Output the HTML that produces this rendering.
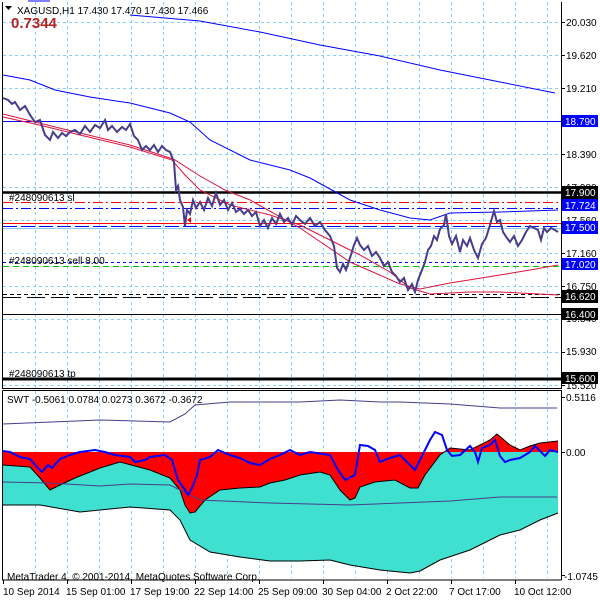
<!DOCTYPE html>
<html><head><meta charset="utf-8"><style>
html,body{margin:0;padding:0;background:#fff;width:600px;height:600px;overflow:hidden}
svg{display:block}
text{font-family:"Liberation Sans",sans-serif;font-size:10px;fill:#000}
</style></head><body>
<svg width="600" height="600" viewBox="0 0 600 600" xmlns="http://www.w3.org/2000/svg">
<rect width="600" height="600" fill="#fff"/>
<!-- vertical grid -->
<g stroke="#87cefa" stroke-width="1" stroke-dasharray="3,3">
<path d="M35.5 2V388M67.5 2V388M99.5 2V388M131.5 2V388M163.5 2V388M195.5 2V388M227.5 2V388M259.5 2V388M291.5 2V388M323.5 2V388M355.5 2V388M387.5 2V388M419.5 2V388M451.5 2V388M483.5 2V388M515.5 2V388M547.5 2V388"/>
<path d="M35.5 391V578M67.5 391V578M99.5 391V578M131.5 391V578M163.5 391V578M195.5 391V578M227.5 391V578M259.5 391V578M291.5 391V578M323.5 391V578M355.5 391V578M387.5 391V578M419.5 391V578M451.5 391V578M483.5 391V578M515.5 391V578M547.5 391V578"/>
<path d="M3 22.5H561M3 55.5H561M3 88.5H561M3 121.5H561M3 154.5H561M3 187.5H561M3 220.5H561M3 253.5H561M3 286.5H561M3 319.5H561M3 352.5H561M3 385.5H561"/>
</g>
<!-- horizontal lines -->
<path d="M3 121.5H561" stroke="#0000ff"/>
<path d="M3 192.5H561" stroke="#000" stroke-width="2.5"/>
<path d="M3 202.5H561" stroke="#ff0000" stroke-dasharray="10,3,2,3"/>
<path d="M3 208.5H561" stroke="#0000ff" stroke-dasharray="10,3,2,3"/>
<path d="M3 223.5H561" stroke="#ff0000"/>
<path d="M3 226.5H561" stroke="#0000ff" stroke-dasharray="14,4"/>
<path d="M3 228.5H561" stroke="#87cefa"/>
<path d="M3 262.5H561" stroke="#0000ff" stroke-dasharray="3,3"/>
<path d="M3 266.5H561" stroke="#00c000" stroke-dasharray="6,4"/>
<path d="M3 294.5H561" stroke="#000" stroke-dasharray="4,3"/>
<path d="M3 297.5H561" stroke="#000" stroke-dasharray="18,6"/>
<path d="M3 314.5H561" stroke="#000"/>
<path d="M3 379H561" stroke="#000" stroke-width="3"/>
<!-- MAs -->
<polyline fill="none" stroke="#0000ff" points="130,15 200,21 260,32 320,45 380,56 440,70 500,82 555,93"/>
<polyline fill="none" stroke="#0000ff" points="28,1 50,1"/>
<polyline fill="none" stroke="#0000ff" points="3,75 30,80 55,90 90,97 130,103 170,113 190,122 210,140 250,160 290,170 310,178 350,200 380,210 410,218 430,220 450,213 500,212 558,210"/>
<polyline fill="none" stroke="#dc143c" points="3,114 35,122 80,133 130,145 170,158 175,160 200,176 225,190 250,200 300,228 350,262 400,284 420,289 450,283 500,275 530,270 558,265"/>
<polyline fill="none" stroke="#dc143c" points="3,117 35,124 80,135 130,147 172,160 185,175 200,190 230,205 270,215 300,225 330,240 360,255 390,272 410,288 430,294 470,292 500,292 558,295"/>
<!-- price -->
<polyline fill="none" stroke="#483d8b" stroke-width="2" points="3,98 8,100 12,104 15,102 20,110 25,106 30,115 35,122 40,120 45,135 50,140 53,132 58,138 62,133 66,136 70,132 75,130 80,134 85,126 90,132 95,125 100,128 105,120 108,130 112,126 117,132 122,127 126,130 130,124 134,136 138,140 142,150 146,146 150,150 154,145 158,152 162,146 166,150 170,152 174,162 176,190 178,186 180,200 183,207 185,226 187,210 190,214 193,200 196,208 200,202 204,210 208,198 212,206 216,193 220,205 224,200 228,210 232,203 236,212 240,209 244,214 248,210 252,216 256,212 260,226 264,220 268,228 272,218 276,224 280,214 284,222 288,218 292,225 296,216 300,220 305,224 310,218 315,226 320,222 325,230 330,236 334,246 337,268 340,272 343,264 346,270 350,258 354,245 357,238 360,245 364,250 368,246 372,256 376,252 380,258 384,266 388,262 392,272 396,276 400,282 404,278 408,290 412,284 415,292 418,280 422,270 425,262 428,250 431,246 434,236 437,240 440,229 444,225 446,214 449,236 452,244 456,236 460,252 463,240 467,246 470,238 474,250 478,258 482,244 486,238 490,225 494,211 497,222 500,220 503,232 507,238 510,242 514,236 518,246 522,240 526,232 530,226 534,228 538,230 541,240 544,228 547,232 551,228 555,230 558,232"/>
<path d="M187 220l4-3v6z" fill="#ff0000"/>
<!-- texts in main -->
<g><path d="M5 6h7l-3.5 4z" fill="#000"/>
<text x="17" y="14">XAGUSD,H1  17.430 17.470 17.430 17.466</text>
<text x="11" y="28" style="font-size:15px;font-weight:bold;fill:#b22222">0.7344</text>
<text x="9" y="201">#248090613 sl</text>
<text x="9" y="264">#248090613 sell 8.00</text>
<text x="9" y="377">#248090613 tp</text></g>
<!-- indicator pane -->
<path d="M3 452 L3 465 30,467 40,478 50,490 60,485 75,478 100,468 120,462 150,470 170,478 180,490 185,505 190,513 195,512 205,500 220,490 240,488 260,487 270,483 285,480 300,475 320,472 330,475 340,490 350,500 355,498 360,487 375,482 395,480 410,488 418,488 425,475 440,455 445,452 Z" fill="#ff0000"/>
<path d="M445 452 L450 448 470 450 490 440 497 434 510 445 520 450 530 446 540 443 558 441 558 452 Z" fill="#ff0000"/>
<path d="M3 465 30,467 40,478 50,490 60,485 75,478 100,468 120,462 150,470 170,478 180,490 185,505 190,513 195,512 205,500 220,490 240,488 260,487 270,483 285,480 300,475 320,472 330,475 340,490 350,500 355,498 360,487 375,482 395,480 410,488 418,488 425,475 440,455 445,452 558,452 558,513 540,520 520,530 500,535 470,550 440,560 420,571 410,573 380,570 350,565 330,560 300,561 270,561 240,557 210,552 190,540 180,520 170,510 130,507 80,512 40,505 3,505Z" fill="#40e0d0"/>
<polyline fill="none" stroke="#000" points="3,465 30,467 40,478 50,490 60,485 75,478 100,468 120,462 150,470 170,478 180,490 185,505 190,513 195,512 205,500 220,490 240,488 260,487 270,483 285,480 300,475 320,472 330,475 340,490 350,500 355,498 360,487 375,482 395,480 410,488 418,488 425,475 440,455 450,448 470,450 490,440 497,434 510,445 520,450 530,446 540,443 558,441"/>
<polyline fill="none" stroke="#000" points="3,505 40,505 80,512 130,507 170,510 180,520 190,540 210,552 240,557 270,561 300,561 330,560 350,565 380,570 410,573 420,571 440,560 470,550 500,535 520,530 540,520 558,513"/>
<polyline fill="none" stroke="#483d8b" points="3,424 100,420 170,422 185,414 195,405 230,402 300,402 340,400 380,402 400,402 450,404 500,408 557,408"/>
<polyline fill="none" stroke="#483d8b" points="3,482 50,483 100,486 130,484 170,485 200,500 270,503 350,505 400,503 450,501 500,497 557,497"/>
<polyline fill="none" stroke="#0000ff" stroke-width="2" points="3,451 10,452 20,457 30,459 38,468 42,472 48,465 52,468 60,459 70,455 80,452 95,450 105,452 115,455 130,457 135,462 145,460 150,457 165,455 172,460 178,480 185,490 188,495 192,488 197,475 200,460 210,457 218,450 230,455 240,458 250,463 260,465 270,459 280,455 290,450 300,455 310,452 330,455 338,470 345,480 355,475 360,445 368,446 375,450 380,462 390,458 400,455 410,465 415,470 420,460 430,440 435,432 442,435 447,450 452,456 460,455 470,446 475,452 478,462 482,448 490,445 495,440 500,456 505,462 510,460 520,458 530,452 535,446 545,456 550,450 558,452"/>
<text x="7" y="403">SWT -0.5061 0.0784 0.0273 0.3672 -0.3672</text>
<text x="7" y="580">MetaTrader 4, © 2001-2014, MetaQuotes Software Corp.</text>
<!-- borders -->
<path d="M2.5 2V388.5H561.5V2M2.5 390.5H561.5V580M2.5 390.5V580H561.5" fill="none" stroke="#000"/>
<!-- time axis ticks -->
<path d="M3.5 580v4M67.5 580v4M131.5 580v4M195.5 580v4M259.5 580v4M323.5 580v4M387.5 580v4M451.5 580v4M515.5 580v4" stroke="#000"/>
<g><text x="3" y="595">10 Sep 2014</text><text x="66" y="595">15 Sep 01:00</text><text x="130" y="595">17 Sep 19:00</text><text x="194" y="595">22 Sep 14:00</text><text x="258" y="595">25 Sep 09:00</text><text x="322" y="595">30 Sep 04:00</text><text x="386" y="595">2 Oct 22:00</text><text x="449" y="595">7 Oct 17:00</text><text x="514" y="595">10 Oct 12:00</text></g>
<!-- price axis -->
<path d="M561 22.5h4M561 55.5h4M561 88.5h4M561 154.5h4M561 187.5h4M561 253.5h4M561 286.5h4M561 352.5h4M561 385.5h4M561 397.5h4M561 452.5h4M561 575.5h4" stroke="#000"/>
<g><text x="566" y="26">20.030</text><text x="566" y="59">19.620</text><text x="566" y="92">19.210</text><text x="566" y="158">18.390</text><text x="566" y="191">17.980</text><text x="566" y="224">17.560</text><text x="566" y="257">17.160</text><text x="566" y="290">16.750</text><text x="566" y="322">16.340</text><text x="566" y="355">15.930</text><text x="566" y="389">15.520</text>
<text x="566" y="401">0.5116</text><text x="566" y="456">0.00</text><text x="564" y="580">-1.0745</text></g>
<g style="font-size:10px">
<rect x="562" y="115" width="36" height="12" fill="#0000ff"/><text x="565" y="125" style="fill:#fff">18.790</text>
<rect x="562" y="186" width="36" height="13" fill="#000"/><text x="565" y="196" style="fill:#fff">17.900</text>
<rect x="562" y="199" width="36" height="12" fill="#0000ff"/><text x="565" y="209" style="fill:#fff">17.724</text>
<rect x="562" y="221" width="36" height="13" fill="#0000ff"/><text x="565" y="231" style="fill:#fff">17.500</text>
<rect x="562" y="258" width="36" height="12" fill="#0000ff"/><text x="565" y="268" style="fill:#fff">17.020</text>
<rect x="562" y="290" width="36" height="13" fill="#000"/><text x="565" y="300" style="fill:#fff">16.620</text>
<rect x="562" y="308" width="36" height="12" fill="#000"/><text x="565" y="318" style="fill:#fff">16.400</text>
<rect x="562" y="372" width="36" height="12" fill="#000"/><text x="565" y="382" style="fill:#fff">15.600</text>
</g>
</svg>
</body></html>
